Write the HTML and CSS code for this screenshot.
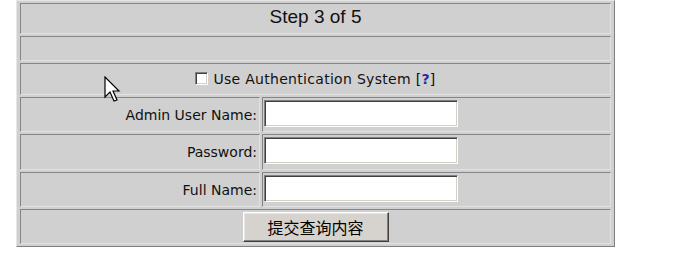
FILE: index.html
```html
<!DOCTYPE html>
<html lang="zh-CN">
<head>
  <meta charset="UTF-8">
  <title>Setup - Step 3</title>
  <link rel="stylesheet" href="styles.css">
</head>
<body>
  <form method="post">
    <table class="setup">
      <tr><td colspan="2" class="title">Step 3 of 5</td></tr>
      <tr><td colspan="2" class="blank"></td></tr>
      <tr>
        <td colspan="2" class="check">
          <label><input type="checkbox" name="use_auth">Use Authentication System [<a href="#" class="help">?</a>]</label>
        </td>
      </tr>
      <tr>
        <td class="label">Admin User Name:</td>
        <td class="field"><input type="text" name="admin_user"></td>
      </tr>
      <tr class="tall">
        <td class="label">Password:</td>
        <td class="field"><input type="password" name="admin_pass"></td>
      </tr>
      <tr>
        <td class="label">Full Name:</td>
        <td class="field"><input type="text" name="full_name"></td>
      </tr>
      <tr>
        <td colspan="2" class="submit"><button type="submit">提交查询内容</button></td>
      </tr>
    </table>
  </form>

  <!-- mouse pointer caught in the screenshot -->
  <svg class="cursor" width="17" height="27" viewBox="0 0 17 27">
    <path d="M1 1 L1 21 L6 16 L10 25 L13 24 L9 15 L15 15 Z" fill="#fff" stroke="#000" stroke-width="1.2" stroke-linejoin="miter"/>
  </svg>
</body>
</html>
```

FILE: styles.css
```css
body { margin: 0; background: #fff; font-family: "DejaVu Sans", Verdana, sans-serif; font-size: 14px; color: #111; }
form { margin: 0; }

.setup {
  margin-left: 16px;
  width: 599px;
  border-collapse: separate;
  border-spacing: 2px;
  padding: 0 1px;
  background: #d0d0d0;
  border: 1px solid;
  border-color: #e6e6e6 #808080 #808080 #e6e6e6;
}
.setup td {
  box-sizing: border-box;
  padding: 0;
  height: 35px;
  border: 1px solid;
  border-color: #858585 #e2e2e2 #e2e2e2 #858585;
  background: #d0d0d0;
  vertical-align: middle;
}
.setup tr.tall td { height: 36px; }

.setup td.title {
  height: 31px;
  padding-bottom: 3px;
  text-align: center;
  font-family: "Liberation Sans", Arial, sans-serif;
  font-size: 19px;
}
.setup td.blank { height: 25px; }
.setup td.check { height: 32px; text-align: center; letter-spacing: 0.3px; }

.check input {
  appearance: none;
  -webkit-appearance: none;
  width: 13px;
  height: 13px;
  margin: 0 5px 0 0;
  vertical-align: -1px;
  background: #fff;
  border: 1px solid;
  border-color: #808080 #fff #fff #808080;
  box-shadow: inset 1px 1px 0 #404040, inset -1px -1px 0 #d4d0c8;
}
.help { color: #2b2b9c; font-weight: bold; text-decoration: none; }

.setup td.label { width: 240px; padding-right: 2px; text-align: right; }
.setup td.field { padding: 2px 0 0 1px; vertical-align: top; }

.field input {
  box-sizing: border-box;
  width: 194px;
  height: 27px;
  margin: 0;
  padding: 2px 3px;
  font: inherit;
  background: #fff;
  border: 1px solid;
  border-color: #808080 #fff #fff #808080;
  box-shadow: inset 1px 1px 0 #404040, inset -1px -1px 0 #d4d0c8;
  outline: none;
}

.setup td.submit { text-align: center; }
.submit button {
  box-sizing: border-box;
  width: 146px;
  height: 30px;
  padding: 0;
  font-family: "Noto Sans CJK SC", sans-serif;
  font-size: 16px;
  color: #000;
  background: #d6d3ce;
  border: 1px solid;
  border-color: #fff #404040 #404040 #fff;
  box-shadow: inset -1px -1px 0 #808080, inset 1px 1px 0 #e8e6e2;
  border-radius: 0;
  cursor: pointer;
}

.cursor { position: absolute; left: 104px; top: 76px; }
```
